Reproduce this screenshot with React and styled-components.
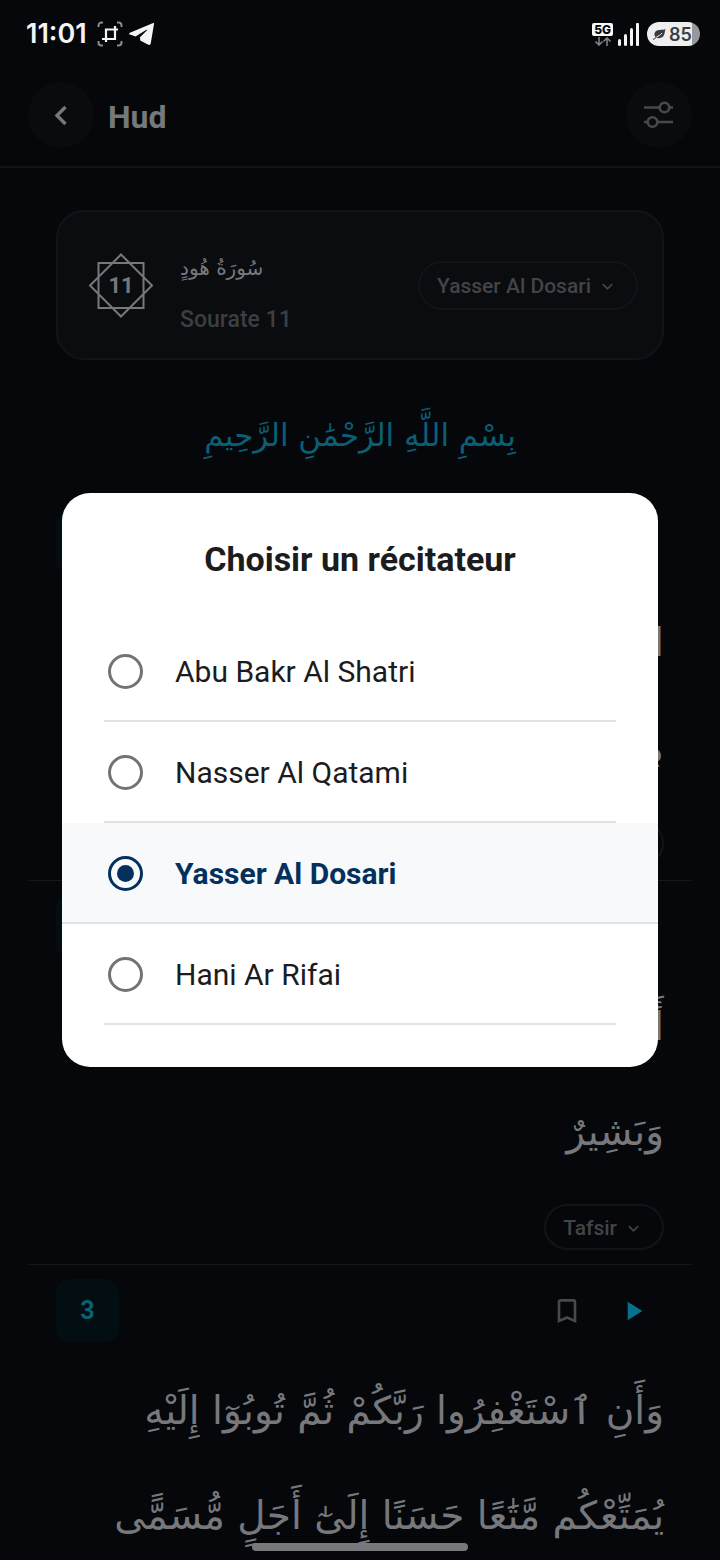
import React, { useState } from 'react';
import styled, { createGlobalStyle, css } from 'styled-components';
import {
  MdBookmarkBorder,
  MdKeyboardArrowDown,
  MdPlayArrow,
} from 'react-icons/md';

const GlobalStyle = createGlobalStyle`
  * {
    box-sizing: border-box;
  }

  body {
    margin: 0;
    background: #05070b;
    color: #77787b;
    font-family: Roboto, 'Liberation Sans', sans-serif;
  }

  button {
    padding: 0;
    border: 0;
    background: none;
    color: inherit;
    font: inherit;
    cursor: pointer;
  }
`;

const Screen = styled.div`
  display: flex;
  flex-direction: column;
  height: 100vh;
  overflow: hidden;
`;

/* Status bar */
const StatusBar = styled.div`
  display: flex;
  flex-shrink: 0;
  align-items: center;
  justify-content: space-between;
  height: 68px;
  padding: 0 20px 0 26px;
  color: #f4f4f5;
`;

const StatusGroup = styled.div`
  display: flex;
  align-items: center;
  gap: ${({ $gap }) => $gap}px;
`;

const Time = styled.span`
  margin-right: 4px;
  font-family: Inter, sans-serif;
  font-size: 27px;
  font-weight: 600;
  line-height: 28px;
`;

const Network = styled.div`
  display: flex;
  flex-direction: column;
  align-items: center;
  gap: 1px;
`;

const NetworkLabel = styled.span`
  padding: 0 2px;
  border-radius: 2px;
  background: #fafafa;
  color: #05070b;
  font-family: Inter, sans-serif;
  font-size: 12px;
  font-weight: 800;
  line-height: 13px;
`;

const Battery = styled.div`
  display: flex;
  align-items: center;
  gap: 3px;
  width: 53px;
  height: 24px;
  margin-left: 3px;
  padding-left: 6px;
  border-radius: 12px;
  background: linear-gradient(to right, #eeeeef 85%, #97989a 85%);
  color: #3b3c3f;
  font-family: Inter, sans-serif;
  font-size: 18px;
  font-weight: 600;
`;

/* Header */
const Header = styled.header`
  display: flex;
  flex-shrink: 0;
  align-items: center;
  gap: 14px;
  padding: 14px 28px 18px;
  border-bottom: 2px solid #121418;
`;

const RoundButton = styled.button`
  display: grid;
  place-items: center;
  width: 66px;
  height: 66px;
  border-radius: 50%;
  background: #0a0b0f;
`;

const PageTitle = styled.h1`
  flex: 1;
  margin: 0;
  padding-top: 4px;
  font-size: 32px;
  font-weight: 700;
  line-height: 40px;
`;

/* Surah card */
const Content = styled.main`
  flex: 1;
  min-height: 0;
  overflow: hidden;
  padding: 42px 28px 0;
`;

const SurahCard = styled.section`
  display: flex;
  align-items: center;
  gap: 26px;
  height: 150px;
  margin: 0 28px;
  padding: 0 24px 0 30px;
  border: 2px solid #121418;
  border-radius: 28px;
  background: #0a0c10;
`;

const StarBadge = styled.div`
  display: grid;
  place-items: center;
  font-size: 22px;
  font-weight: 700;

  > * {
    grid-area: 1 / 1;
  }
`;

const SurahInfo = styled.div`
  display: flex;
  flex: 1;
  flex-direction: column;
  align-items: flex-start;
  gap: 18px;
  padding-top: 12px;
`;

const SurahName = styled.span`
  font-family: 'DejaVu Sans', sans-serif;
  font-size: 20px;
  line-height: 40px;
`;

const SurahNumber = styled.span`
  color: #3c3e41;
  font-size: 23px;
  font-weight: 500;
  line-height: 28px;
`;

const Pill = styled.button`
  display: flex;
  align-items: center;
  gap: 6px;
  height: ${({ $small }) => ($small ? 46 : 49)}px;
  padding: 2px 18px 0 17px;
  border: 2px solid #121418;
  border-radius: 25px;
  color: #424447;
  font-size: 21px;
  font-weight: 500;
`;

const Basmala = styled.p`
  margin: 18px 0 4px;
  color: #0b5e73;
  font-family: 'DejaVu Sans', sans-serif;
  font-size: 31px;
  line-height: 115px;
  text-align: center;
`;

/* Verses */
const Verse = styled.article`
  display: flex;
  flex-direction: column;
  align-items: flex-end;
  padding: 14px 28px;
  border-bottom: 1px solid #15171a;
`;

const VerseBar = styled.div`
  display: flex;
  align-items: center;
  justify-content: space-between;
  width: 100%;
  margin-bottom: 16px;
`;

const VerseNumber = styled.span`
  width: 63px;
  border-radius: 14px;
  background: #030e12;
  color: #0b6076;
  font-size: 25px;
  font-weight: 700;
  line-height: 63px;
  text-align: center;
`;

const VerseActions = styled.div`
  display: flex;
  gap: 3px;
`;

const ActionButton = styled.button`
  display: grid;
  place-items: center;
  width: 63px;
  height: 63px;
  border-radius: 50%;
  color: ${({ $accent }) => ($accent ? '#08708c' : '#48494c')};
`;

const VerseText = styled.p`
  margin: 0;
  font-family: 'DejaVu Sans', sans-serif;
  font-size: 39px;
  line-height: 105px;
  white-space: nowrap;
`;

const VerseLine = styled.span`
  display: block;
`;

const TafsirButton = styled(Pill)`
  margin-top: 20px;
`;

/* Reciter dialog */
const Overlay = styled.div`
  position: fixed;
  inset: 0;
  display: flex;
  align-items: center;
  padding: 0 62px;
`;

const Dialog = styled.div`
  width: 100%;
  padding: 42px 0;
  border-radius: 28px;
  background: #fff;
  color: #1b1c1e;
`;

const DialogTitle = styled.h2`
  margin: 0 0 38px;
  font-size: 34px;
  font-weight: 700;
  line-height: 48px;
  text-align: center;
`;

const Option = styled.label`
  display: flex;
  align-items: center;
  gap: 32px;
  height: 101px;
  margin: 0 42px;
  padding: 2px 0 0 4px;
  border-bottom: 2px solid #e1e2e4;
  font-size: 30px;
  cursor: pointer;

  ${({ $selected }) =>
    $selected &&
    css`
      margin: 0;
      padding-left: 46px;
      background: #f7f9fb;
      color: #03305c;
      font-weight: 700;
    `}
`;

const Radio = styled.input`
  display: grid;
  place-items: center;
  width: 35px;
  height: 35px;
  margin: 0;
  border: 3px solid #737373;
  border-radius: 50%;
  appearance: none;

  &:checked {
    border-color: #03305c;
  }

  &:checked::before {
    width: 17px;
    height: 17px;
    border-radius: 50%;
    background: #03305c;
    content: '';
  }
`;

const HomeIndicator = styled.div`
  position: fixed;
  bottom: 9px;
  left: 50%;
  width: 30%;
  height: 8px;
  border-radius: 4px;
  background: #77787b;
  transform: translateX(-50%);
`;

const reciters = [
  'Abu Bakr Al Shatri',
  'Nasser Al Qatami',
  'Yasser Al Dosari',
  'Hani Ar Rifai',
];

const verses = [
  {
    number: 1,
    lines: ['الٓر كِتَٰبٌ أُحْكِمَتْ ءَايَٰتُهُ ثُمَّ فُصِّلَتْ', 'مِن لَّدُنْ حَكِيمٍ خَبِيرٍ'],
  },
  {
    number: 2,
    lines: ['أَلَّا تَعْبُدُوٓا إِلَّا ٱللَّهَ إِنَّنِى لَكُم مِّنْهُ نَذِيرٌ', 'وَبَشِيرٌ'],
  },
  {
    number: 3,
    lines: ['وَأَنِ ٱسْتَغْفِرُوا رَبَّكُمْ ثُمَّ تُوبُوٓا إِلَيْهِ', 'يُمَتِّعْكُم مَّتَٰعًا حَسَنًا إِلَىٰٓ أَجَلٍ مُّسَمًّى'],
  },
];

const CropIcon = () => (
  <svg width="26" height="26" viewBox="0 0 26 26" fill="none">
    <path
      d="M1.500 6V4.500a3 3 0 0 1 3-3H6M20 1.500h1.500a3 3 0 0 1 3 3V6M24.500 20v1.500a3 3 0 0 1-3 3H20M6 24.500H4.500a3 3 0 0 1-3-3V20"
      stroke="#8b8c8f"
      strokeWidth="2"
    />
    <path
      d="M5 18h13V5M9 21V8.500h12"
      stroke="currentColor"
      strokeWidth="2.200"
    />
  </svg>
);

const TelegramIcon = () => (
  <svg width="25" height="22" viewBox="0 0 25 22" fill="currentColor">
    <path d="M24.200.1.900 9.800c-1.100.5-1.200 1.300 0 1.700l5.600 1.900L17.500 6.800c.8-.4 1 0 .5.500L11 14.200l.2 3.300 7.600 4.100c1.700.8 2.600.2 3-1.300L25 1c.1-.8-.1-1.100-.8-.9Z" />
  </svg>
);

const DataArrows = () => (
  <svg width="16" height="9" viewBox="0 0 16 9" fill="none" stroke="#7e8083">
    <path
      d="M4 0v8M.5 4.500 4 8l3.500-3.500M12 9V1M8.500 4.500 12 1l3.500 3.500"
      strokeWidth="1.600"
    />
  </svg>
);

const SignalIcon = () => (
  <svg width="21" height="23" viewBox="0 0 21 23" fill="currentColor">
    <rect x="0" y="16" width="3" height="7" rx="1.500" />
    <rect x="6" y="11" width="3" height="12" rx="1.500" />
    <rect x="12" y="5" width="3" height="18" rx="1.500" />
    <rect x="18" y="0" width="3" height="23" rx="1" />
  </svg>
);

const LeafIcon = () => (
  <svg width="13" height="11" viewBox="0 0 13 11">
    <path
      d="M12.500 0C9 1.500 5 0 2.500 2.500.8 4.300 1.300 7 2.600 8 4.500 9.800 8.500 9.500 10.500 7 12 5 11.600 2 12.500 0Z"
      fill="currentColor"
    />
    <path d="M3.500 7.700C5.500 7.200 7.500 6 9 4" stroke="#eeeeef" fill="none" />
    <path d="M0 10.500C1.500 10 2.500 9 3.500 8" stroke="currentColor" fill="none" />
  </svg>
);

const BackIcon = () => (
  <svg width="24" height="24" viewBox="0 0 24 24" fill="none">
    <path d="m16.500 4-8.500 8.500 8.500 8.500" stroke="currentColor" strokeWidth="3.400" />
  </svg>
);

const FilterIcon = () => (
  <svg
    width="32"
    height="28"
    viewBox="0 0 32 28"
    fill="none"
    stroke="#48494c"
    strokeWidth="2.600"
  >
    <path d="M1 6.500h15.500M26.500 6.500H30M1 21h3.500M14.500 21H30" />
    <circle cx="21.500" cy="6.500" r="4.800" />
    <circle cx="9.500" cy="21" r="4.800" />
  </svg>
);

const StarIcon = () => (
  <svg
    width="66"
    height="66"
    viewBox="0 0 66 66"
    fill="none"
    stroke="currentColor"
    strokeWidth="2"
  >
    <path d="M10.500 11h45v45h-45ZM33 2.500 64 33.500 33 64.500 2 33.500Z" />
  </svg>
);

function App() {
  const [reciter, setReciter] = useState('Yasser Al Dosari');

  return (
    <>
      <GlobalStyle />
      <Screen>
        <StatusBar>
          <StatusGroup $gap={6}>
            <Time>11:01</Time>
            <CropIcon />
            <TelegramIcon />
          </StatusGroup>
          <StatusGroup $gap={5}>
            <Network>
              <NetworkLabel>5G</NetworkLabel>
              <DataArrows />
            </Network>
            <SignalIcon />
            <Battery>
              <LeafIcon />
              85
            </Battery>
          </StatusGroup>
        </StatusBar>

        <Header>
          <RoundButton type="button" aria-label="Retour">
            <BackIcon />
          </RoundButton>
          <PageTitle>Hud</PageTitle>
          <RoundButton type="button" aria-label="Réglages">
            <FilterIcon />
          </RoundButton>
        </Header>

        <Content>
          <SurahCard>
            <StarBadge>
              <StarIcon />
              <span>11</span>
            </StarBadge>
            <SurahInfo>
              <SurahName lang="ar" dir="rtl">
                سُورَةُ هُودٍ
              </SurahName>
              <SurahNumber>Sourate 11</SurahNumber>
            </SurahInfo>
            <Pill type="button">
              {reciter}
              <MdKeyboardArrowDown size={21} />
            </Pill>
          </SurahCard>

          <Basmala lang="ar" dir="rtl">
            بِسْمِ اللَّهِ الرَّحْمَٰنِ الرَّحِيمِ
          </Basmala>

          {verses.map(({ number, lines }) => (
            <Verse key={number}>
              <VerseBar>
                <VerseNumber>{number}</VerseNumber>
                <VerseActions>
                  <ActionButton type="button" aria-label="Marquer">
                    <MdBookmarkBorder size={32} />
                  </ActionButton>
                  <ActionButton type="button" aria-label="Écouter" $accent>
                    <MdPlayArrow size={32} />
                  </ActionButton>
                </VerseActions>
              </VerseBar>
              <VerseText lang="ar" dir="rtl">
                {lines.map((line) => (
                  <VerseLine key={line}>{line}</VerseLine>
                ))}
              </VerseText>
              <TafsirButton type="button" $small>
                Tafsir
                <MdKeyboardArrowDown size={21} />
              </TafsirButton>
            </Verse>
          ))}
        </Content>
      </Screen>

      <Overlay>
        <Dialog role="dialog" aria-modal="true" aria-labelledby="reciter-title">
          <DialogTitle id="reciter-title">Choisir un récitateur</DialogTitle>
          {reciters.map((name) => (
            <Option key={name} $selected={name === reciter}>
              <Radio
                type="radio"
                name="reciter"
                value={name}
                checked={name === reciter}
                onChange={() => setReciter(name)}
              />
              {name}
            </Option>
          ))}
        </Dialog>
      </Overlay>
      <HomeIndicator />
    </>
  );
}

export default App;
